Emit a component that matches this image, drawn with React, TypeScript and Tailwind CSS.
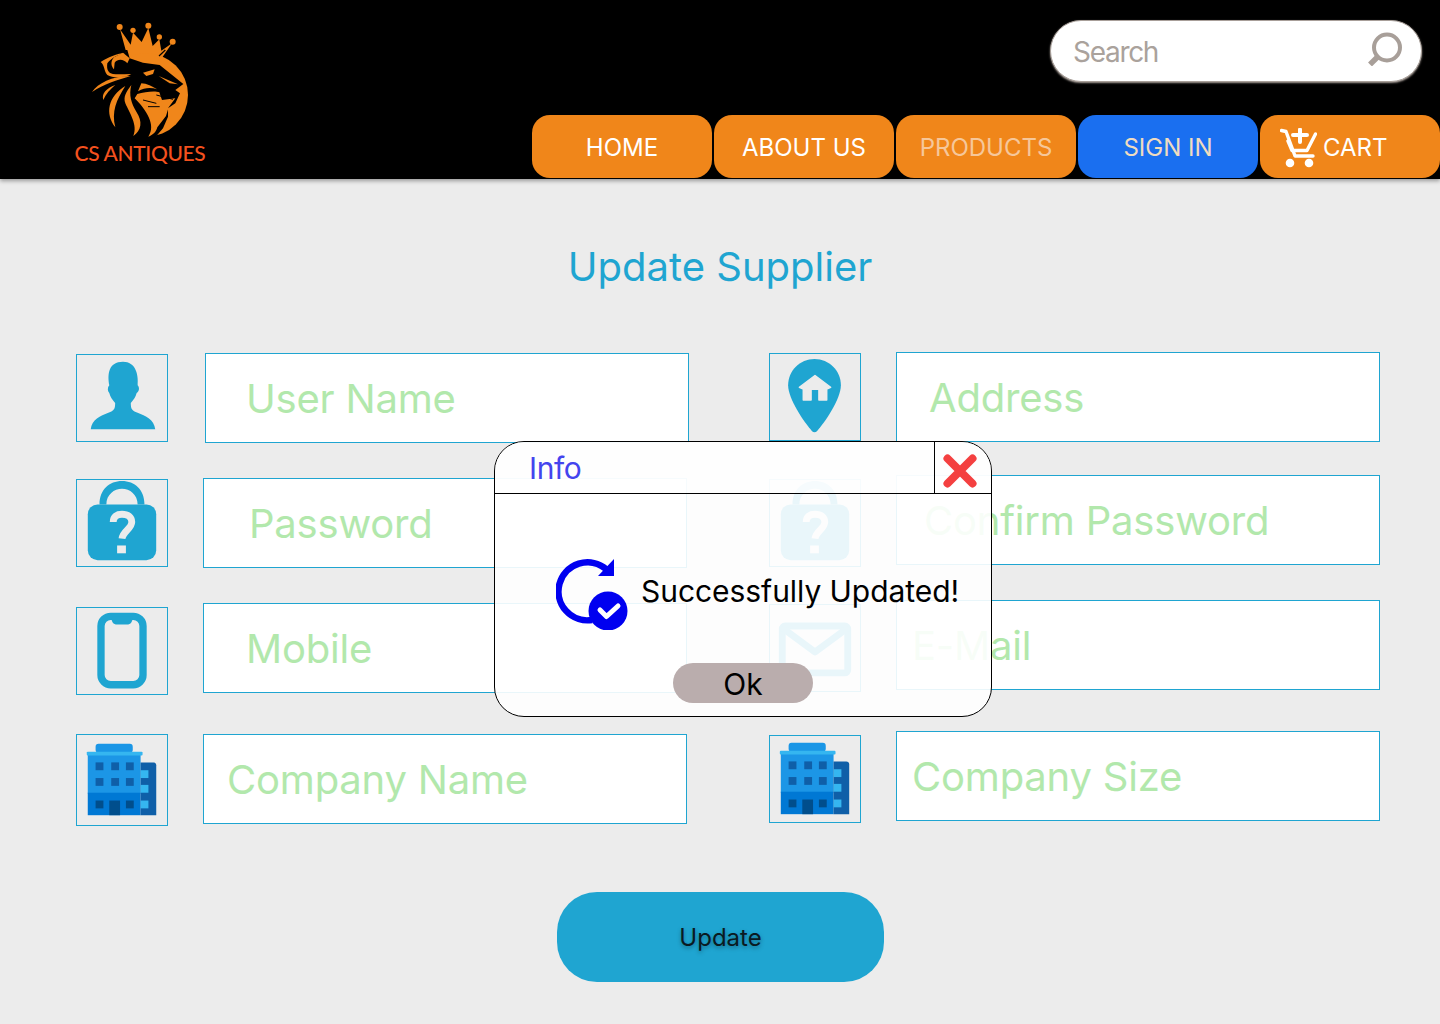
import React from "react";

function Logo() {
  return (
    <svg viewBox="0 0 480 396" className="w-[160px] h-[132px]">
      <g fill="#f0861a">
        {/* crown */}
        <circle cx="179" cy="51" r="9" />
        <circle cx="219" cy="61" r="8" />
        <circle cx="265" cy="47" r="9" />
        <circle cx="298" cy="81" r="8" />
        <circle cx="338" cy="95" r="9" />
        <path d="M180 58 L212 104 L219 68 L245 96 L265 54 L278 108 L298 88 L304 122 L336 100 L304 146 L204 146 Z" />
        <circle cx="259" cy="255" r="125" />
      </g>
      <g transform="translate(84 120)">
        {/* head silhouette, same black as the header */}
        <path fill="#000" d="M118 0 L125 25 L165 38 L215 45 L286 102 L262 120 L276 130 L262 160 L240 175 L240 200 L225 235 L200 264 L-10 270 L-10 0 Z" />
        <path d="M213 18 L232 0" stroke="#000" strokeWidth="3.500" fill="none" />
        <g fill="#f0861a">
          {/* ear */}
          <path d="M38 36 C60 22 85 10 115 8 C95 12 70 22 58 40 C55 60 62 70 75 72 C90 74 110 72 130 72 C110 84 75 85 58 75 C48 65 50 45 38 36 Z" />
          <path d="M105 8 L125 25 L118 40 C108 28 90 25 80 38 L78 58 C70 50 66 35 78 22 Z" />
          {/* mane strands */}
          <path d="M12 126 C30 100 70 78 128 78 C90 90 50 100 12 126 Z" />
          <path d="M46 150 C40 130 55 115 82 105 C65 120 55 130 46 150 Z" />
          <path d="M82 232 C50 190 60 140 112 108 C85 150 70 185 82 232 Z" />
          <path d="M136 258 C150 225 125 190 112 160 C105 140 115 125 130 105 C122 135 130 160 145 185 C165 215 160 240 136 258 Z" />
          {/* face */}
          <path d="M165 68 L200 58 L195 72 L175 78 Z" />
          <path d="M212 78 L270 103 L245 100 Z" />
          <path d="M160 100 C175 100 195 110 207 118 C190 112 170 112 150 124 Z" />
          <path d="M148 132 C170 126 200 122 214 127 L222 150 L262 145 L242 172 L234 198 L208 232 C205 245 195 255 181 260 C205 225 175 180 140 145 Z" />
        </g>
        <path d="M165 150 L205 160 M180 170 L215 170 M205 135 L255 148" stroke="#000" strokeWidth="3" fill="none" />
      </g>
    </svg>
  );
}

function SearchIcon() {
  return (
    <svg viewBox="0 0 36 36" className="w-[36px] h-[36px] -mt-[6px]" fill="none" stroke="#a89f99">
      <circle cx="20" cy="17.500" r="13" strokeWidth="4" />
      <path d="M10.500 27 L3 34.500" strokeWidth="5.500" />
    </svg>
  );
}

function CartIcon() {
  return (
    <svg viewBox="0 0 37 40" className="w-[37px] h-[40px]" fill="none" stroke="#fff" strokeWidth="3.400" strokeLinecap="round" strokeLinejoin="round">
      <path d="M1.500 2.500 L6 3.500 L15 28 L33 28" />
      <path d="M8 13 L12 22.500 L27 22.500 L35.500 6" />
      <path d="M20 1.500 L20 14 M13 7 L27 7" strokeWidth="4" />
      <circle cx="10" cy="35" r="2.600" fill="#fff" />
      <circle cx="29" cy="35" r="2.600" fill="#fff" />
    </svg>
  );
}

function NavButton({ children, className }: { children: React.ReactNode; className: string }) {
  return (
    <a className={`w-[180px] h-[63px] rounded-[18px] flex items-center justify-center pt-[2px] text-[24px] ${className}`}>
      {children}
    </a>
  );
}

function UserIcon() {
  return (
    <svg viewBox="0 0 92 88" className="w-full h-full" fill="#1fa5d1">
      <path d="M14 76 C15 66 24 62 32 59 C38 57 39 55 39 49 C36 46 34 43 33 39 C31 37 31 33 33 31 C31 20 32 7 47 7 C60 7 63 20 62 31 C64 33 64 37 61 39 C60 43 58 46 55 49 C55 55 56 57 62 59 C70 62 79 66 80 76 Z" />
    </svg>
  );
}

function LockIcon() {
  return (
    <svg viewBox="0 0 92 88" className="w-full h-full" fill="#1fa5d1">
      <path d="M23 25 C23 10 33 1 46 1 C59 1 69 10 69 25 L62 25 C62 15 54 9 46 9 C38 9 30 15 30 25 Z" />
      <rect x="11" y="25" width="70" height="57" rx="10" />
      <path d="M37 43 C37 37 41 35 46 35 C52 35 56 38 56 43 C56 50 47 52 46 60" fill="none" stroke="#ececec" strokeWidth="7" />
      <rect x="41" y="67" width="9" height="8" fill="#ececec" />
    </svg>
  );
}

function PhoneIcon() {
  return (
    <svg viewBox="0 0 92 88" className="w-full h-full">
      <rect x="24.500" y="8.500" width="43" height="70" rx="10" fill="none" stroke="#1fa5d1" strokeWidth="7.500" />
      <path d="M35 9 H57 C57 14 55 17 51 17 H41 C37 17 35 14 35 9 Z" fill="#1fa5d1" />
    </svg>
  );
}

function BuildingIcon({ viewBox }: { viewBox: string }) {
  return (
    <svg viewBox={viewBox} className="w-full h-full">
      <rect x="19" y="9" width="38" height="9" rx="3" fill="#1a96e6" />
      <rect x="11" y="20" width="54" height="40" fill="#1c96e6" />
      <rect x="11" y="59" width="54" height="23" fill="#0078d4" />
      <rect x="10" y="17" width="57" height="4" rx="1" fill="#35b6f0" />
      <path d="M65 28 H78 C80 28 81 29 81 31 V82 H65 Z" fill="#0f5fa8" />
      <g fill="#35b6f0">
        <rect x="65" y="36" width="8" height="8" />
        <rect x="65" y="51" width="8" height="8" />
        <rect x="65" y="67" width="8" height="8" />
      </g>
      <g fill="#0f5fa8">
        <rect x="19" y="28" width="8" height="8" />
        <rect x="35" y="28" width="8" height="8" />
        <rect x="50" y="28" width="8" height="8" />
        <rect x="19" y="44" width="8" height="8" />
        <rect x="35" y="44" width="8" height="8" />
        <rect x="50" y="44" width="8" height="8" />
      </g>
      <g fill="#004e8c">
        <rect x="19" y="67" width="8" height="8" />
        <rect x="33" y="67" width="11" height="15" />
        <rect x="50" y="67" width="8" height="8" />
      </g>
    </svg>
  );
}

function PinIcon() {
  return (
    <svg viewBox="0 0 92 88" className="w-full h-full">
      <path d="M45.500 5 C60.500 5 72.500 17 72.500 32 C72.500 46 56 70 48 79 C46.500 80.500 44.500 80.500 43 79 C35 70 18.500 46 18.500 32 C18.500 17 30.500 5 45.500 5 Z" fill="#1fa5d1" />
      <path d="M46 22 L62 34 L58 36 V47 H50 V36 H42 V47 H34 V36 L30 34 Z" fill="#ececec" strokeLinejoin="round" stroke="#ececec" strokeWidth="1.500" />
    </svg>
  );
}

function MailIcon() {
  return (
    <svg viewBox="0 0 92 88" className="w-full h-full" fill="none" stroke="#1fa5d1" strokeWidth="7" strokeLinejoin="round">
      <rect x="12.500" y="21.500" width="67" height="48" rx="3" />
      <path d="M12 23 L46 48 L80 23" />
    </svg>
  );
}

function SuccessIcon() {
  return (
    <svg viewBox="0 0 72 72" className="w-[72px] h-[72px] shrink-0">
      <path d="M50 11 A 29 29 0 1 0 36 62" fill="none" stroke="#0000f0" strokeWidth="6.500" />
      <path d="M58 1 V18 H42 Z" fill="#0000f0" />
      <circle cx="52" cy="53" r="19.500" fill="#0000f0" />
      <path d="M44 52 L50.500 58.500 L62 48" fill="none" stroke="#fff" strokeWidth="5" strokeLinecap="round" strokeLinejoin="round" />
    </svg>
  );
}

function Field({
  placeholder,
  icon,
  rowClass,
  iconClass,
  inputClass,
}: {
  placeholder: string;
  icon: React.ReactNode;
  rowClass: string;
  iconClass: string;
  inputClass: string;
}) {
  return (
    <div className={`flex items-start ${rowClass}`}>
      <div className={`w-[92px] shrink-0 border border-[#1fa5d1] ${iconClass}`}>{icon}</div>
      <input
        placeholder={placeholder}
        className={`w-[484px] h-[90px] bg-white border border-[#1fa5d1] text-[40px] tracking-[-0.2px] outline-none placeholder:text-[#b2e8ac] ${inputClass}`}
      />
    </div>
  );
}

export default function App() {
  return (
    <div className="relative h-[1024px] overflow-hidden bg-[#ececec] font-['Inter',sans-serif]">
      <header className="relative z-10 h-[179px] bg-black flex justify-between shadow-[0_2px_4px_rgba(0,0,0,0.35)]">
        <div className="ml-[60px] mt-[10px] w-[160px] flex flex-col items-center">
          <Logo />
          <span className="text-[21px] leading-[22px] tracking-[-0.35px] font-medium text-[#f4511e] font-['Lato',sans-serif]">CS ANTIQUES</span>
        </div>
        <div className="flex flex-col items-end">
          <div className="mt-[20px] mr-[18px] w-[372px] h-[62px] bg-white rounded-full border border-[#a89f99] shadow-[0_1px_2px_#a89f99] flex items-center justify-between pl-[22px] pr-[18px]">
            <span className="text-[28px] tracking-[-1.3px] text-[#aaa29c] pt-[1px]">Search</span>
            <SearchIcon />
          </div>
          <nav className="mt-[33px] flex gap-[2px]">
            <NavButton className="bg-[#f0861a] text-white">HOME</NavButton>
            <NavButton className="bg-[#f0861a] text-white">ABOUT US</NavButton>
            <NavButton className="bg-[#f0861a] text-[#f6c79a]">PRODUCTS</NavButton>
            <NavButton className="bg-[#1a6ff0] text-[#f0dcc0]">SIGN IN</NavButton>
            <NavButton className="bg-[#f0861a] text-white gap-[6px] !justify-start pl-[20px]">
              <CartIcon />
              CART
            </NavButton>
          </nav>
        </div>
      </header>

      <main className="flex flex-col">
        <h1 className="mt-[64px] h-[48px] text-center text-[40px] leading-[48px] text-[#1fa5d1]">Update Supplier</h1>
        <div className="flex pl-[76px]">
          <div className="w-[693px] mt-[62px] flex flex-col">
            <Field placeholder="User Name" icon={<UserIcon />} rowClass="" iconClass="mt-px h-[88px]" inputClass="ml-[37px] pl-[40px]" />
            <Field placeholder="Password" icon={<LockIcon />} rowClass="mt-[35px]" iconClass="mt-px h-[88px]" inputClass="ml-[35px] pl-[45px]" />
            <Field placeholder="Mobile" icon={<PhoneIcon />} rowClass="mt-[35px]" iconClass="mt-[4px] h-[88px]" inputClass="ml-[35px] pl-[42px]" />
            <Field placeholder="Company Name" icon={<BuildingIcon viewBox="0 0 92 92" />} rowClass="mt-[39px]" iconClass="h-[92px]" inputClass="ml-[35px] pl-[23px]" />
          </div>
          <div className="mt-[61px] flex flex-col">
            <Field placeholder="Address" icon={<PinIcon />} rowClass="" iconClass="mt-px h-[88px]" inputClass="ml-[35px] pl-[32px]" />
            <Field placeholder="Confirm Password" icon={<LockIcon />} rowClass="mt-[33px]" iconClass="mt-[4px] h-[88px]" inputClass="ml-[35px] pl-[27px]" />
            <Field placeholder="E-Mail" icon={<MailIcon />} rowClass="mt-[33px]" iconClass="mt-[4px] h-[88px]" inputClass="ml-[35px] pl-[15px]" />
            <Field placeholder="Company Size" icon={<BuildingIcon viewBox="0 2 92 88" />} rowClass="mt-[39px]" iconClass="mt-[4px] h-[88px]" inputClass="ml-[35px] pl-[15px]" />
          </div>
        </div>
        <button className="mt-[66px] ml-[557px] w-[327px] h-[90px] rounded-[40px] bg-[#1fa5d1] pt-[2px] text-[24px] text-[#0a1a22] [text-shadow:0_2px_4px_rgba(0,0,0,0.35)]">
          Update
        </button>
      </main>

      {/* modal */}
      <div className="absolute z-20 left-[494px] top-[441px] w-[498px] h-[276px] rounded-[30px] border border-black bg-white/90 overflow-hidden">
        <div className="h-[52px] flex justify-between border-b border-black bg-white/60">
          <span className="ml-[34px] mt-[6px] text-[30px] leading-[40px] tracking-[-0.4px] text-[#4444ee]">Info</span>
          <div className="w-[57px] border-l border-black pl-[8px] pt-[12px]">
            <svg viewBox="0 0 34 34" className="w-[34px] h-[34px]" fill="none" stroke="#f44040" strokeWidth="8" strokeLinecap="round">
              <path d="M4.500 4.500 L29.500 29.500 M29.500 4.500 L4.500 29.500" />
            </svg>
          </div>
        </div>
        <div className="flex items-center ml-[61px] mt-[64px]">
          <SuccessIcon />
          <span className="ml-[13px] text-[30px] leading-[40px] tracking-[-0.05px] text-black whitespace-nowrap -mt-[6px]">Successfully Updated!</span>
        </div>
        <button className="block mt-[33px] ml-[178px] w-[140px] h-[40px] rounded-full bg-[#baadad] pt-[1px] text-[30px] leading-[38px] text-black">Ok</button>
      </div>
    </div>
  );
}
